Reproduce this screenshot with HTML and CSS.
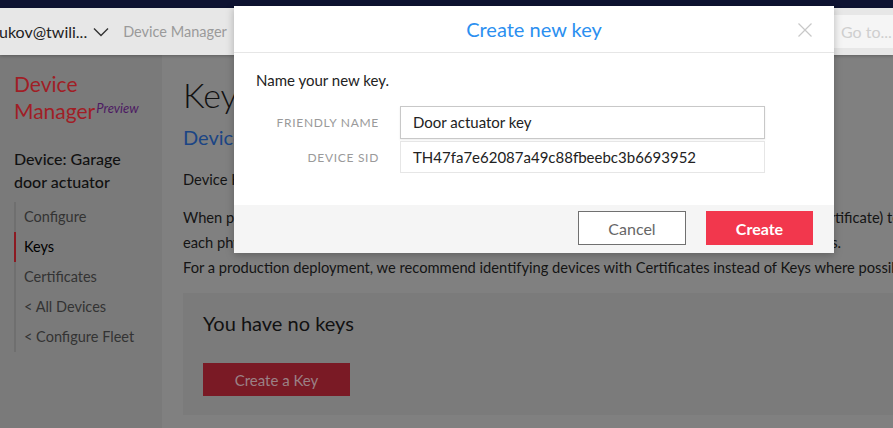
FILE: index.html
```html
<!DOCTYPE html>
<html lang="en">
<head>
<meta charset="utf-8">
<title>Device Manager - Keys</title>
<link rel="stylesheet" href="styles.css">
</head>
<body>
<div class="topbar"></div>
<header class="header">
  <span class="account">ukov@twili...</span>
  <svg class="chev" width="16" height="10" viewBox="0 0 16 10"><path d="M1 1.5 L8 8.5 L15 1.5" fill="none" stroke="#333" stroke-width="1.4"/></svg>
  <span class="crumb">Device Manager</span>
  <div class="goto">Go to...</div>
</header>
<div class="page">
  <aside class="sidebar">
    <div class="brand">Device<br>Manager<span class="preview">Preview</span></div>
    <div class="device-title">Device: Garage door actuator</div>
    <nav class="nav">
      <a class="nav-item">Configure</a>
      <a class="nav-item active">Keys</a>
      <a class="nav-item">Certificates</a>
      <a class="nav-item">&lt; All Devices</a>
      <a class="nav-item">&lt; Configure Fleet</a>
    </nav>
  </aside>
  <main class="main">
    <h1 class="title">Keys</h1>
    <h2 class="subtitle">Device Keys</h2>
    <p class="lead">Device Keys are secrets used to authenticate a physical device.</p>
    <p class="para">
      <span class="line">When provisioning devices, you need to assign each device an identifier and a credential (a Key or Certificate) to</span>
      <span class="line">each physical device that will connect to your services. You can generate and revoke these device keys.</span>
      <span class="line">For a production deployment, we recommend identifying devices with Certificates instead of Keys where possible.</span>
    </p>
    <section class="card">
      <h3 class="card-title">You have no keys</h3>
      <button class="btn-dim">Create a Key</button>
    </section>
  </main>
</div>

<div class="modal">
  <div class="modal-head">
    <span class="modal-title">Create new key</span>
    <svg class="close" width="14" height="14" viewBox="0 0 14 14"><path d="M0.5 0.5 L13.5 13.5 M13.5 0.5 L0.5 13.5" stroke="#c8c8c8" stroke-width="1.2" fill="none"/></svg>
  </div>
  <div class="modal-body">
    <p class="intro">Name your new key.</p>
    <div class="form">
      <label class="label">Friendly name</label>
      <div class="input strong">Door actuator key</div>
      <label class="label">Device SID</label>
      <div class="input light">TH47fa7e62087a49c88fbeebc3b6693952</div>
    </div>
  </div>
  <div class="modal-foot">
    <button class="btn cancel">Cancel</button>
    <button class="btn create">Create</button>
  </div>
</div>
</body>
</html>
```
FILE: styles.css
```css
* { box-sizing: border-box; }
html, body { margin: 0; padding: 0; }
body {
  width: 893px;
  height: 428px;
  overflow: hidden;
  font-family: Lato, "Open Sans", "Liberation Sans", sans-serif;
  background: #808080;
  position: relative;
}
.topbar { height: 8px; background: #0e1332; }
.header {
  height: 47px;
  background: #e7e7e7;
  display: flex;
  align-items: center;
  position: relative;
  z-index: 2;
  box-shadow: 0 1px 3px rgba(0,0,0,0.25);
  overflow: hidden;
}
.account { font-size: 16px; color: #222; margin-left: -1px; }
.chev { margin-left: 6px; margin-top: 1px; }
.crumb { font-size: 14.5px; color: #9a9a9a; margin-left: 14px; }
.goto {
  margin-left: auto;
  margin-right: -30px;
  width: 90px;
  height: 33px;
  background: #f5f5f5;
  color: #cfcfcf;
  font-size: 16px;
  line-height: 33px;
  padding-left: 8px;
  flex-shrink: 0;
}
.page { display: flex; height: 373px; }
.sidebar {
  width: 162px;
  flex-shrink: 0;
  background: #7a7a7a;
  padding: 17px 0 0 14px;
}
.brand { font-size: 21px; line-height: 24px; color: #a01e26; }
.preview { font-size: 13px; font-style: italic; color: #4d1a63; margin-left: 1px; vertical-align: 6px; }
.device-title { margin-top: 24px; font-size: 16px; line-height: 23px; color: #111; font-weight: 500; padding-right: 10px; }
.nav { margin-top: 9px; border-left: 2px solid #6f6f6f; display: flex; flex-direction: column; }
.nav-item { font-size: 14.5px; line-height: 30px; color: #333; padding-left: 8px; margin-left: -2px; border-left: 2px solid transparent; }
.nav-item.active { border-left-color: #8c1a22; color: #000; }
.main { flex: 1; padding-left: 21px; overflow: hidden; min-width: 0; }
.title { margin: 20px 0 0; font-size: 34px; line-height: 40px; font-weight: 300; color: #111; }
.subtitle { margin: 9px 0 0; font-size: 20px; line-height: 26px; font-weight: 400; color: #1b4585; }
.lead { margin: 17px 0 0; font-size: 14.7px; line-height: 24px; color: #141414; }
.para { margin: 14px 0 0; font-size: 14.7px; line-height: 25px; color: #141414; white-space: nowrap; }
.line { display: block; }
.card {
  margin-top: 13px;
  width: 760px;
  height: 122px;
  background: #7b7b7b;
  padding: 19px 20px 0;
}
.card-title { margin: 0; font-size: 20px; line-height: 22px; font-weight: 400; color: #111; }
.btn-dim {
  margin-top: 29px;
  width: 147px; height: 33px;
  border: 0;
  background: #7a1a25;
  color: #9a8186;
  font-family: inherit;
  font-size: 15px;
}

.modal {
  position: absolute;
  left: 234px;
  top: 6px;
  width: 600px;
  height: 247px;
  background: #fff;
  z-index: 5;
  box-shadow: 0 2px 8px rgba(0,0,0,0.25);
  display: flex;
  flex-direction: column;
}
.modal-head {
  height: 47px;
  border-bottom: 1px solid #e6e6e6;
  display: flex;
  align-items: center;
  justify-content: center;
  position: relative;
}
.modal-title { font-size: 20px; color: #2b8ff0; margin-top: -1px; }
.close { position: absolute; right: 22px; top: 17px; }
.modal-body { flex: 1; padding: 18px 21px 0 22px; }
.intro { margin: 0; font-size: 15px; line-height: 18px; color: #222; }
.form {
  margin-top: 17px;
  display: grid;
  grid-template-columns: 123px 365px;
  column-gap: 21px;
  row-gap: 2px;
  align-items: center;
}
.label { text-align: right; font-size: 12px; letter-spacing: 0.7px; text-transform: uppercase; color: #9a9a9a; }
.input { height: 33px; padding-left: 12px; font-size: 15px; line-height: 31px; color: #222; border: 1px solid #e6e6e6; }
.input.strong { border-color: #c8c8c8; box-shadow: 0 1px 2px rgba(0,0,0,0.08); }
.input.light { height: 32px; }
.modal-foot {
  height: 48px;
  background: #f5f5f5;
  display: flex;
  justify-content: flex-end;
  align-items: flex-start;
  gap: 20px;
  padding: 6px 21px 0;
}
.btn { height: 34px; font-family: inherit; font-size: 16px; cursor: pointer; }
.cancel { width: 108px; background: #fff; color: #666; border: 1px solid #707070; }
.create { width: 107px; background: #f2374d; color: #fff; border: 0; font-weight: 700; }
```
